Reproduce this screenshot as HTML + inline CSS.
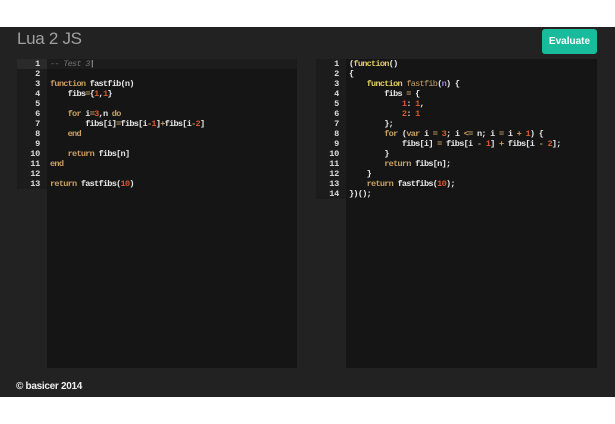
<!DOCTYPE html>
<html><head><meta charset="utf-8"><style>
body{margin:0;width:615px;height:424px;background:#fff;position:relative;overflow:hidden;font-family:"Liberation Sans",sans-serif}
.main{position:absolute;left:0;top:27px;width:615px;height:370px;background:#222}
.title{position:absolute;left:17px;top:2px;font-size:17px;color:#a0a0a0;letter-spacing:-0.3px}
.btn{position:absolute;left:542px;top:2px;width:55px;height:25px;background:#18bc9c;border-radius:3px;color:#fff;font-size:10px;font-weight:bold;text-align:center;line-height:25px}
.ed{position:absolute;top:32px;height:309px;background:#151515}
.gut{position:absolute;top:32px;width:30px;background:#1c1c1c}
.code,.nums{position:absolute;font-family:"Liberation Mono",monospace;font-size:8.6px;letter-spacing:-0.75px;font-weight:bold;line-height:10px;white-space:pre;color:#e8e8e8}
.nums{text-align:right;width:23px;color:#ddd;letter-spacing:-0.3px}
.k{color:#c9a062}.n{color:#d9582f}.c{color:#6f6f6f;font-style:italic;font-weight:normal}.y{color:#e3cf60}.p{color:#9a8ad8}.f{color:#c9a062;font-weight:normal}
.foot{position:absolute;left:16px;top:354px;font-size:10px;font-weight:bold;color:#eee;letter-spacing:-0.3px}
.act{position:absolute;height:10px;top:32px}
</style></head><body>
<div class="main">
<div class="title">Lua 2 JS</div>
<div class="btn">Evaluate</div>

<div class="gut" style="left:17px;height:130px"></div>
<div class="act" style="left:17px;width:30px;background:#2a2a2a"></div>
<div class="ed" style="left:47px;width:250px"></div>
<div class="act" style="left:47px;width:250px;background:#1c1c1c"></div>
<div class="nums" style="left:17px;top:32px">1
2
3
4
5
6
7
8
9
10
11
12
13</div>
<div class="code" style="left:50px;top:32px"><span class="c">-- Test 3</span><span style="color:#ccc;font-weight:normal">|</span>

<span class="k">function</span> fastfib(n)
    fibs<span class="k">=</span>{<span class="n">1</span>,<span class="n">1</span>}

    <span class="k">for</span> i<span class="k">=</span><span class="n">3</span>,n <span class="k">do</span>
        fibs[i]<span class="k">=</span>fibs[i<span class="k">-</span><span class="n">1</span>]<span class="k">+</span>fibs[i<span class="k">-</span><span class="n">2</span>]
    <span class="k">end</span>

    <span class="k">return</span> fibs[n]
<span class="k">end</span>

<span class="k">return</span> fastfibs(<span class="n">10</span>)</div>

<div class="gut" style="left:316px;height:140px"></div>
<div class="ed" style="left:346px;width:251px"></div>
<div class="nums" style="left:316px;top:32px">1
2
3
4
5
6
7
8
9
10
11
12
13
14</div>
<div class="code" style="left:349px;top:32px">(<span class="y">function</span>()
{
    <span class="y">function</span> <span class="f">fastfib</span>(<span class="p">n</span>) {
        fibs <span class="k">=</span> {
            <span class="n">1</span>: <span class="n">1</span>,
            <span class="n">2</span>: <span class="n">1</span>
        };
        <span class="k">for</span> (<span class="k">var</span> i <span class="k">=</span> <span class="n">3</span>; i <span class="k">&lt;=</span> n; i <span class="k">=</span> i <span class="k">+</span> <span class="n">1</span>) {
            fibs[i] <span class="k">=</span> fibs[i <span class="k">-</span> <span class="n">1</span>] <span class="k">+</span> fibs[i <span class="k">-</span> <span class="n">2</span>];
        }
        <span class="k">return</span> fibs[n];
    }
    <span class="k">return</span> fastfibs(<span class="n">10</span>);
})();</div>

<div class="foot">© basicer 2014</div>
</div>
</body></html>
